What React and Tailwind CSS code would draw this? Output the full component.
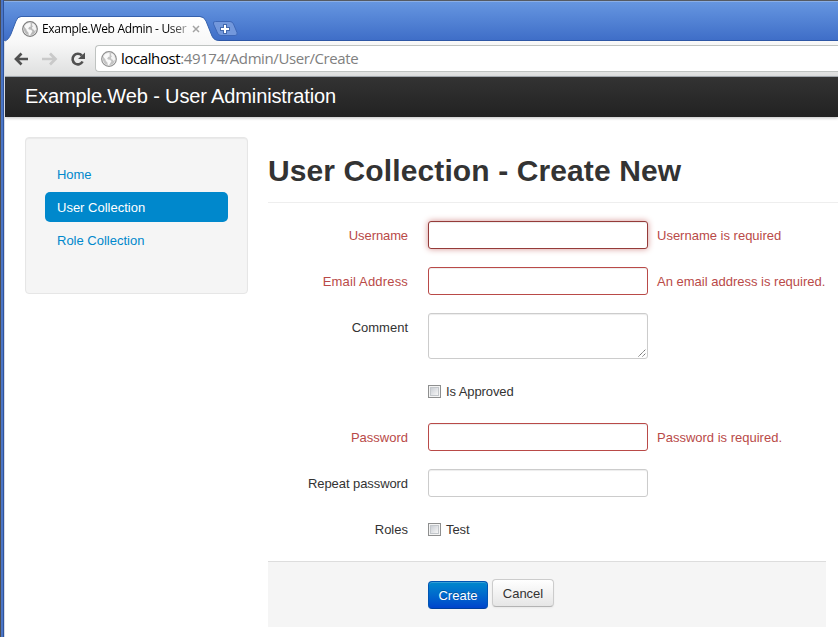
import React from "react";

function Globe({ className }) {
  return (
    <svg className={className} viewBox="0 0 16 16">
      <circle cx="8" cy="8" r="7.3" fill="#f6f6f6" stroke="#7d7d7d" strokeWidth="1.200" />
      <circle cx="8" cy="8" r="6.200" fill="#b9b9b9" />
      <path d="M2.300 5.600 4.200 3l3-1.200 1.800.9-.6 1.500.6 1.100-1.800.8-1 1.500.8.9 2 .3 1.400 1.400-1.100 2-1.300 2-1.300-.4-.3-2.300-1.500-1.600-.7-2-1-.8z" fill="#f8f8f8" />
      <path d="m10.200 2.300 2 1 1.500 2.200.4 2.800-1.200 2-1.100-1.600-1.300-.5-.6-1.700 1-1.300-.9-1z" fill="#f4f4f4" />
    </svg>
  );
}

function Chrome() {
  return (
    <>
      <header className="relative flex h-[41px] shrink-0 border-t border-[#555a62] bg-linear-to-b from-[#6797e1] to-[#3e6dc7]">
        <div className="absolute inset-x-0 top-0 h-px bg-[#8aaee6]" />
        <div className="absolute inset-x-0 bottom-0 h-px bg-[#2d56a5]" />
        <svg className="absolute left-0 top-[15px] h-[26px] w-[245px]" viewBox="0 0 245 26">
          <defs>
            <linearGradient id="tabFill" x1="0" y1="0" x2="0" y2="1">
              <stop offset="0" stopColor="#ffffff" />
              <stop offset="1" stopColor="#f8f8f8" />
            </linearGradient>
          </defs>
          <path d="M4 26V25C8 24 9 22 11 18L16 5Q17.500 1 21 1H200Q204 1 206 5L212 20Q214 24.500 219 24.500V26Z" fill="url(#tabFill)" />
          <path d="M4 25.500C8 24 9 22 11 18L16 5Q17.500 .5 21 .5H200Q204 .5 206 5L212 20Q214 24.500 219 24.500" fill="none" stroke="#3561ad" />
          <path d="M215.500 5.500H230Q232.500 5.500 233.500 8L237 16.500Q238 19.500 235 19.500H221Q218.500 19.500 217.500 17L213.500 8Q212.500 5.500 215.500 5.500Z" fill="#7398dc" stroke="#3e68b8" />
          <path d="M220 13h10M225 8v10" stroke="#4369ad" strokeWidth="4" />
          <path d="M221 13h8M225 9v8" stroke="#fff" strokeWidth="2" />
        </svg>
        <div className="relative mt-4 flex h-6 items-center pl-[22px]">
          <Globe className="size-4 shrink-0" />
          <span className="ml-1 w-[145px] overflow-hidden whitespace-nowrap bg-linear-to-r from-black from-85% to-[#aaa] bg-clip-text font-['Open_Sans',sans-serif] text-[12px] tracking-[-0.32px] text-transparent">Example.Web Admin - User</span>
          <svg className="ml-[5px] size-[8px]" viewBox="0 0 8 8"><path d="m1 1 6 6m0-6L1 7" stroke="#a4a4a4" strokeWidth="1.500" /></svg>
        </div>
      </header>
      <div className="ml-1 flex h-9 shrink-0 items-center border-b border-[#a9afb5] bg-linear-to-b from-[#f9f9f9] to-[#dedfdf]">
        <svg className="h-9 w-[91px] shrink-0" viewBox="4 41 91 36" fill="none">
          <path d="M16 59h12M21.500 53.500l-5.500 5.500 5.500 5.500" stroke="#505050" strokeWidth="2.700" />
          <path d="M42 59h12M50 53.500l5.500 5.500-5.500 5.500" stroke="#c9c9c9" strokeWidth="2.700" />
          <path d="M81.800 55.500A5.300 5.300 0 1 0 82.600 61.500" stroke="#505050" strokeWidth="2.600" />
          <path d="M85 52.500v6.500h-7z" fill="#505050" />
        </svg>
        <div className="flex h-[27px] flex-1 items-center rounded-l border border-r-0 border-[#bfc3c1] bg-white pl-[5px]">
          <Globe className="size-4 shrink-0 opacity-85" />
          <div className="-mt-[2px] ml-1 whitespace-nowrap font-['Open_Sans',sans-serif] text-[15px] leading-5 tracking-[-0.4px] text-[#808080]"><span className="text-black">localhost</span>:49174/Admin/User/Create</div>
        </div>
      </div>
    </>
  );
}

function Row({ label, error, children, className = "h-7", labelClass = "" }) {
  return (
    <div className={`flex items-start ${className} ${error ? "text-[#b94a48]" : "text-[#333]"}`}>
      <div className={`w-[140px] shrink-0 pt-[6px] text-right ${labelClass}`}>{label}</div>
      <div className="ml-5 flex items-start">{children}</div>
      {error && <span className="ml-[9px] whitespace-nowrap pt-[6px]">{error}</span>}
    </div>
  );
}

const field = "block h-7 w-[220px] rounded-[3px] border bg-white outline-none";
const inset = "shadow-[inset_0_1px_1px_rgba(0,0,0,0.075)]";

function Check({ label }) {
  return (
    <label className="flex items-start pt-[6px]">
      <span className="mt-[2px] flex size-[13px] items-center justify-center border border-[#8e8f8f] bg-[#f4f4f4]">
        <span className="size-[9px] border border-[#c3c7cb] bg-linear-to-br from-[#cbcfd5] to-[#f6f6f6]" />
      </span>
      <span className="ml-[5px] tracking-[-0.1px]">{label}</span>
    </label>
  );
}

export default function App() {
  return (
    <div className="relative flex h-[637px] w-[838px] flex-col overflow-hidden bg-white font-['Liberation_Sans',Arial,sans-serif] text-[13px] leading-[18px]">
      <Chrome />
      <div className="ml-[5px] flex h-10 shrink-0 items-center bg-linear-to-b from-[#333] to-[#222] pl-5 text-[20px] leading-5 text-white shadow-[0_1px_3px_rgba(0,0,0,0.25)]">
        <span className="-mt-[2px] tracking-[-0.13px]">Example.Web - User Administration</span>
      </div>
      <div className="flex pl-[25px] pt-5">
        <nav className="flex h-[157px] w-[223px] shrink-0 flex-col gap-[3px] rounded border border-[#e6e6e6] bg-[#f5f5f5] px-[19px] pt-[21px] text-[#0088cc] shadow-[inset_0_1px_1px_rgba(0,0,0,0.05)]">
          <a className="h-[30px] rounded-[5px] px-3 pt-[7px] tracking-[-0.1px]">Home</a>
          <a className="h-[30px] rounded-[5px] bg-[#0088cc] px-3 pt-[7px] text-white">User Collection</a>
          <a className="h-[30px] rounded-[5px] px-3 pt-[7px]">Role Collection</a>
        </nav>
        <main className="ml-5 w-[570px] shrink-0">
          <h1 className="h-[66px] border-b border-[#eee] pt-[16px] text-[30px] font-bold leading-9 tracking-[0.11px] text-[#333]">User Collection - Create New</h1>
          <div className="mt-[18px] flex flex-col gap-[18px]">
            <Row label="Username" labelClass="tracking-[-0.1px]" error="Username is required">
              <input className={`${field} border-[#953b39] shadow-[inset_0_1px_1px_rgba(0,0,0,0.075),0_0_6px_#d59392]`} />
            </Row>
            <Row label="Email Address" labelClass="tracking-[0.17px]" error="An email address is required.">
              <input className={`${field} ${inset} border-[#b94a48]`} />
            </Row>
            <Row label="Comment" className="h-[46px]">
              <div className={`flex h-[46px] w-[220px] items-end justify-end rounded-[3px] border border-[#ccc] ${inset}`}>
                <svg className="mb-px mr-px size-[8px]" viewBox="0 0 8 8"><path d="m.5 7.500 7-7m-3 7 3-3" stroke="#555" strokeWidth=".9" strokeDasharray="1.500 .4" /></svg>
              </div>
            </Row>
            <Row label=""><Check label="Is Approved" /></Row>
            <Row label="Password" error="Password is required.">
              <input className={`${field} ${inset} border-[#b94a48]`} />
            </Row>
            <Row label="Repeat password" labelClass="tracking-[-0.08px]"><input className={`${field} ${inset} border-[#ccc]`} /></Row>
            <Row label="Roles"><Check label="Test" /></Row>
          </div>
          <div className="mt-[18px] flex h-[66px] w-[558px] items-start gap-1 border-t border-[#ddd] bg-[#f5f5f5] pl-[160px] pt-[17px]">
            <button className="mt-[2px] h-7 w-[60px] rounded border border-[#0055b3] border-b-[#003f9e] bg-linear-to-b from-[#0088cc] to-[#0044cc] pt-px text-white shadow-[inset_0_1px_0_rgba(255,255,255,0.2)] [text-shadow:0_-1px_0_rgba(0,0,0,0.25)]">Create</button>
            <button className="h-7 w-[62px] rounded border border-[#ccc] border-b-[#b3b3b3] bg-linear-to-b from-white to-[#e6e6e6] pt-px text-[#333] shadow-[0_1px_2px_rgba(0,0,0,0.05)]">Cancel</button>
          </div>
        </main>
      </div>
      <div className="absolute inset-y-0 left-0 flex w-[5px]">
        <div className="w-px bg-[#4d4d50]" />
        <div className="w-[2px] bg-[#4a75c6]" />
        <div className="w-px bg-[#2e539c]" />
        <div className="mt-[41px] w-px bg-[#d7dbe2]" />
      </div>
    </div>
  );
}
